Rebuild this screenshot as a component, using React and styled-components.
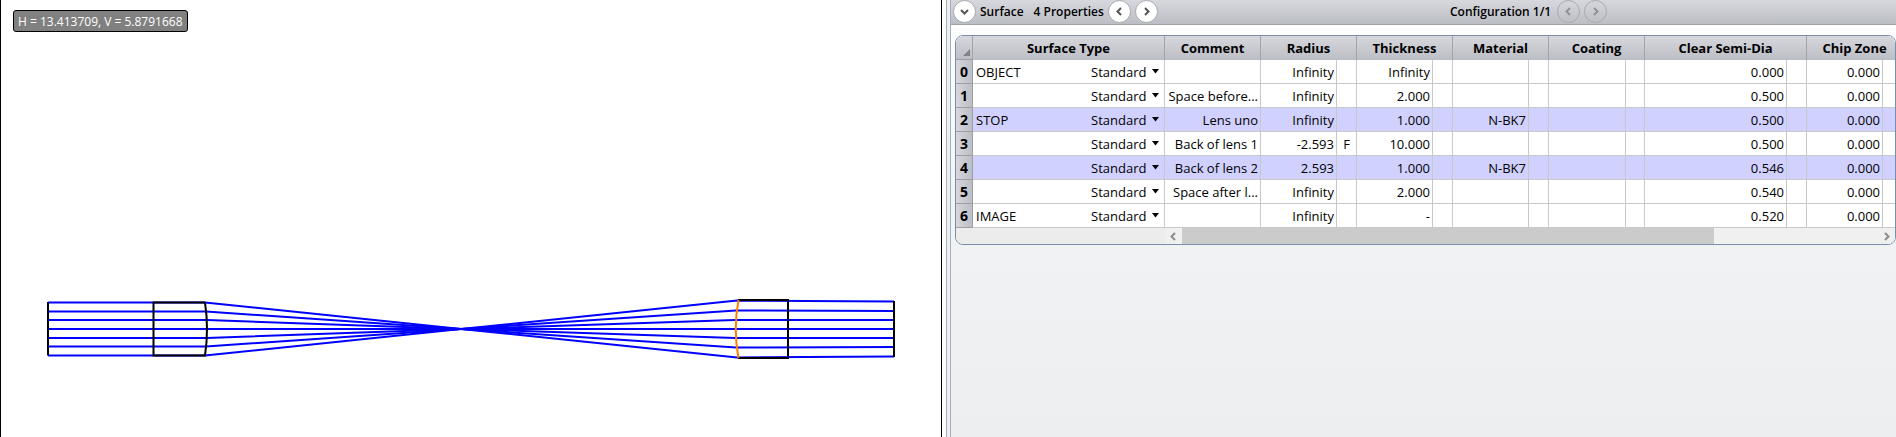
import React from "react";
import styled, { createGlobalStyle } from "styled-components";

const GlobalStyle = createGlobalStyle`
  * { box-sizing: border-box; }
  html, body { margin: 0; height: 100%; }
  #root { height: 100%; }
  body {
    font-family: "Open Sans", "Noto Sans", sans-serif;
    color: #000;
    overflow: hidden;
  }
`;

const Workspace = styled.div`
  display: grid;
  grid-template-columns: minmax(0, 942fr) 9px minmax(0, 945fr);
  height: 100vh;
`;

const LayoutPane = styled.section`
  border: solid #000;
  border-width: 0 1px;
  background: #fff;
  position: relative;
  min-width: 0;
`;

const Coordinates = styled.output`
  position: absolute;
  top: 10px;
  left: 12px;
  height: 22px;
  padding: 0 4px;
  border: 1px solid #000;
  border-radius: 3px;
  background: #808080;
  color: #fff;
  font-size: 12px;
  line-height: 21px;
  white-space: nowrap;
`;

const Drawing = styled.svg`
  display: block;
  width: 100%;
  height: auto;
`;

const Splitter = styled.div`
  margin-left: 4px;
  border: solid #a3afbd;
  border-width: 0 1px;
  background: #eeeff1;
`;

const EditorPane = styled.section`
  min-width: 0;
  background: linear-gradient(#fff, #f1f3f5 200px, #eceef0);
`;

const Toolbar = styled.header`
  display: flex;
  align-items: center;
  height: 25px;
  padding: 0 3px 2px 2px;
  border-bottom: 1px solid #9fa1a7;
  background: linear-gradient(#d6d8dd, #bcbec5);
  font-size: 12px;
  font-weight: 600;
  white-space: nowrap;
`;

const ToolGroup = styled.div`
  display: flex;
  align-items: center;
  flex: ${(p) => p.$grow || "none"};
  gap: 4px;
`;

const Label = styled.span`
  margin-right: ${(p) => p.$after || 0}px;
`;

const RoundButton = styled.button`
  display: grid;
  place-items: center;
  width: 23px;
  height: 23px;
  padding: 0;
  border: 1px solid #a6a8ac;
  border-radius: 50%;
  background: #fff;
  color: #555;
  &:disabled {
    background: transparent;
    color: #909296;
  }
`;

const GridFrame = styled.div`
  margin: 10px 0 0 4px;
  border: 1px solid #7790a8;
  border-radius: 8px;
  background: #ececec;
  overflow: hidden;
`;

const Sheet = styled.table`
  width: calc(100% + 7px);
  table-layout: fixed;
  border-collapse: separate;
  border-spacing: 0;
  font-size: 13px;
  line-height: 20px;
  background: #fff;
`;

const ColumnHeader = styled.th`
  height: 24px;
  padding: 0;
  border-right: 1px solid #a2a4aa;
  background: linear-gradient(#d6d8dd, #bcbec5);
  font-weight: 700;
  white-space: nowrap;
  &:last-child { border-right: 0; }
`;

const Corner = styled(ColumnHeader)`
  border-bottom: 1px solid #9c9ea4;
  vertical-align: bottom;
  svg { display: block; margin: 0 2px 3px auto; }
`;

const RowHeader = styled.th`
  height: 24px;
  padding: 0;
  border: solid #9c9ea4;
  border-width: 0 1px 1px 0;
  background: linear-gradient(90deg, #d6d8dd, #bcbec5);
  font-size: 14px;
  font-weight: 700;
`;

const Row = styled.tr`
  background: ${(p) => (p.$tinted ? "#d1d1ff" : "#fff")};
`;

const Cell = styled.td`
  height: 24px;
  padding: 0 2px;
  border: solid #c8c8c8;
  border-width: 0 1px 1px 0;
  text-align: ${(p) => p.$align || "right"};
  white-space: nowrap;
  overflow: hidden;
  &:last-child { border-right: 0; }
`;

const TypeField = styled.div`
  display: flex;
  align-items: center;
  justify-content: space-between;
  padding: 0 3px 0 1px;
`;

const SelectWrap = styled.label`
  display: flex;
  align-items: center;
  gap: 5px;
`;

const TypeSelect = styled.select`
  appearance: none;
  border: 0;
  padding: 0;
  margin: 0;
  background: transparent;
  color: inherit;
  font: inherit;
`;

const ScrollBar = styled.div`
  display: flex;
  height: 16px;
  padding-left: 209px;
  background: #ececec;
`;

const ScrollButton = styled.button`
  display: grid;
  place-items: center;
  width: 17px;
  flex: none;
  padding: 0;
  border: 0;
  background: #f0f0f0;
  color: #8c8c8c;
`;

const ScrollTrack = styled.div`
  display: grid;
  grid-template-columns: 532fr 164fr;
  flex: 1;
  background: #f0f0f0;
`;

const ScrollThumb = styled.div`
  background: #cbcbcb;
`;

const CHEVRONS = {
  down: "M1 3 L4.5 6.5 L8 3",
  left: "M6 1 L2.5 4.5 L6 8",
  right: "M3 1 L6.5 4.5 L3 8",
};

function Chevron({ to, weight = 2 }) {
  return (
    <svg width="9" height="9" viewBox="0 0 9 9" fill="none" stroke="currentColor" strokeWidth={weight}>
      <path d={CHEVRONS[to]} />
    </svg>
  );
}

const COLUMN_WIDTHS = [17, 192, 96, 76, 20, 76, 20, 76, 20, 77, 19, 142, 20, 76];
const HEADINGS = ["Radius", "Thickness", "Material", "Coating", "Clear Semi-Dia", "Chip Zone"];

const SURFACES = [
  { kind: "OBJECT", comment: "", radius: "Infinity", thickness: "Infinity", semi: "0.000" },
  { kind: "", comment: "Space before...", radius: "Infinity", thickness: "2.000", semi: "0.500" },
  { kind: "STOP", comment: "Lens uno", radius: "Infinity", thickness: "1.000", material: "N-BK7", semi: "0.500" },
  { kind: "", comment: "Back of lens 1", radius: "-2.593", flag: "F", thickness: "10.000", semi: "0.500" },
  { kind: "", comment: "Back of lens 2", radius: "2.593", thickness: "1.000", material: "N-BK7", semi: "0.546" },
  { kind: "", comment: "Space after l...", radius: "Infinity", thickness: "2.000", semi: "0.540" },
  { kind: "IMAGE", comment: "", radius: "Infinity", thickness: "-", semi: "0.520" },
];

/* Heights of each ray in the first lens, at the second lens and at the image plane. */
const RAYS = [
  [302.5, 300.5, 301.5],
  [311.5, 310.5, 311],
  [320, 320, 320],
  [329, 329, 329],
  [338, 338, 338],
  [346.5, 347.5, 347],
  [355.5, 357.5, 356.5],
];

function RayDrawing() {
  return (
    <Drawing viewBox="1 0 940 437" fill="none" strokeWidth="2" role="img" aria-label="Lens layout">
      <g stroke="#0000ff">
        {RAYS.map(([entry], i) => {
          const [, lens, image] = RAYS[6 - i];
          const bend = 6 - Math.abs(i - 3);
          return (
            <path
              key={i}
              d={`M48 ${entry} H${202 + bend} L461 329 L${740 - bend} ${lens} L894 ${image}`}
            />
          );
        })}
      </g>
      <g stroke="#000">
        <path d="M48 302 V355.5" />
        <path d="M205 302.5 H153.5 V355.5 H205 Q209 329 205 302.5" />
        <path d="M738 300 H788 V358 H738" />
        <path d="M894 301 V357" />
      </g>
      <path d="M738.5 300 Q733 329 738.5 358" stroke="#ff8000" />
    </Drawing>
  );
}

function SurfaceRow({ surface, index }) {
  return (
    <Row $tinted={Boolean(surface.material)}>
      <RowHeader scope="row">{index}</RowHeader>
      <Cell $align="left">
        <TypeField>
          <span>{surface.kind}</span>
          <SelectWrap>
            <TypeSelect aria-label={`Surface ${index} type`} defaultValue="Standard">
              <option>Standard</option>
            </TypeSelect>
            <svg width="7" height="5" viewBox="0 0 7 5"><path d="M0 0 H7 L3.5 4.5 Z" /></svg>
          </SelectWrap>
        </TypeField>
      </Cell>
      <Cell>{surface.comment}</Cell>
      <Cell>{surface.radius}</Cell>
      <Cell $align="center">{surface.flag}</Cell>
      <Cell>{surface.thickness}</Cell>
      <Cell />
      <Cell>{surface.material}</Cell>
      <Cell />
      <Cell />
      <Cell />
      <Cell>{surface.semi}</Cell>
      <Cell />
      <Cell>0.000</Cell>
      <Cell />
    </Row>
  );
}

export default function App() {
  return (
    <>
      <GlobalStyle />
      <Workspace>
        <LayoutPane>
          <Coordinates>H = 13.413709, V = 5.8791668</Coordinates>
          <RayDrawing />
        </LayoutPane>
        <Splitter />
        <EditorPane>
          <Toolbar>
            <ToolGroup $grow="1">
              <RoundButton aria-label="Expand properties"><Chevron to="down" /></RoundButton>
              <Label $after={6}>Surface</Label>
              <Label>4 Properties</Label>
              <RoundButton aria-label="Previous surface"><Chevron to="left" /></RoundButton>
              <RoundButton aria-label="Next surface"><Chevron to="right" /></RoundButton>
            </ToolGroup>
            <ToolGroup $grow="0 0 443px">
              <Label $after={2}>Configuration 1/1</Label>
              <RoundButton disabled aria-label="Previous configuration"><Chevron to="left" /></RoundButton>
              <RoundButton disabled aria-label="Next configuration"><Chevron to="right" /></RoundButton>
            </ToolGroup>
          </Toolbar>
          <GridFrame>
            <Sheet>
              <colgroup>
                {COLUMN_WIDTHS.map((w, i) => <col key={i} style={{ width: w }} />)}
                <col />
              </colgroup>
              <thead>
                <tr>
                  <Corner aria-label="Select all">
                    <svg width="7" height="7" viewBox="0 0 7 7"><path d="M7 0 V7 H0 Z" fill="#808287" /></svg>
                  </Corner>
                  <ColumnHeader scope="col">Surface Type</ColumnHeader>
                  <ColumnHeader scope="col">Comment</ColumnHeader>
                  {HEADINGS.map((h) => <ColumnHeader key={h} scope="col" colSpan={2}>{h}</ColumnHeader>)}
                </tr>
              </thead>
              <tbody>
                {SURFACES.map((s, i) => <SurfaceRow key={i} surface={s} index={i} />)}
              </tbody>
            </Sheet>
            <ScrollBar>
              <ScrollButton aria-label="Scroll left"><Chevron to="left" /></ScrollButton>
              <ScrollTrack><ScrollThumb /></ScrollTrack>
              <ScrollButton aria-label="Scroll right"><Chevron to="right" /></ScrollButton>
            </ScrollBar>
          </GridFrame>
        </EditorPane>
      </Workspace>
    </>
  );
}
